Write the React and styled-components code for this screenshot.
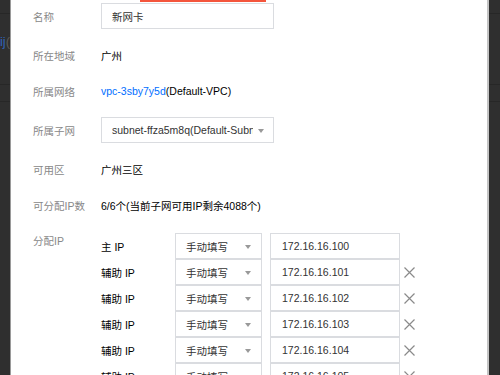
import React from 'react';
import styled, { createGlobalStyle } from 'styled-components';

const Global = createGlobalStyle`
  html, body { margin: 0; padding: 0; }
  body {
    font-family: "Liberation Sans", "Noto Sans CJK SC", sans-serif;
    font-size: 10.5px;
    color: #000;
    background: #2f2f2f;
  }
`;

const Screen = styled.div`
  display: flex;
  width: 500px;
  height: 375px;
  overflow: hidden;
`;

const Backdrop = styled.div`
  display: flex;
  flex-direction: column;
  width: ${(p) => p.w}px;
  flex-shrink: 0;
  background: #2f2f2f;
  overflow: hidden;
`;

const BackRow = styled.div`
  height: ${(p) => p.h}px;
  flex-shrink: 0;
  border-bottom: 1px solid #272727;
  display: flex;
  align-items: flex-start;
  justify-content: flex-end;
  padding-top: ${(p) => p.pt || 0}px;
  box-sizing: border-box;
  white-space: nowrap;
  overflow: hidden;
  font-size: 13px;
  color: #2f63b8;
`;

const Dim = styled.span`
  color: #5a5a5a;
`;

const Modal = styled.div`
  flex: 1;
  background: #fff;
  border-left: 1px solid #9a9a9a;
  border-right: 2px solid #c4c4c4;
  padding-left: 22px;
  overflow: hidden;
`;

const TopBar = styled.div`
  margin-left: 107px;
  width: 126px;
  height: 2px;
  background: #f4553c;
`;

const Form = styled.div`
  display: flex;
  flex-direction: column;
  gap: 16px;
  padding-top: 1px;
`;

const Item = styled.div`
  display: flex;
  align-items: ${(p) => (p.top ? 'flex-start' : 'center')};
  min-height: ${(p) => (p.text ? 20 : 26)}px;
  margin-top: ${(p) => p.mt || 0}px;
`;

const Label = styled.div`
  width: 68px;
  flex-shrink: 0;
  color: #888;
  line-height: ${(p) => (p.top ? '16px' : 'normal')};
`;

const Value = styled.div`
  color: #000;
  white-space: nowrap;
`;

const Link = styled.span`
  color: #006eff;
`;

const Input = styled.div`
  box-sizing: border-box;
  width: ${(p) => p.w}px;
  height: 26px;
  border: 1px solid #dadce0;
  padding-left: ${(p) => p.pl || 10}px;
  display: flex;
  align-items: center;
  color: #333;
  white-space: nowrap;
  overflow: hidden;
`;

const Select = styled(Input)`
  position: relative;
  padding-right: 20px;
  &::after {
    content: '';
    position: absolute;
    right: ${(p) => p.ar || 10}px;
    top: 11px;
    border-left: 3.5px solid transparent;
    border-right: 3.5px solid transparent;
    border-top: 4px solid #999;
  }
`;

const SelectText = styled.span`
  overflow: hidden;
`;

const IpList = styled.div`
  display: flex;
  flex-direction: column;
`;

const IpRow = styled.div`
  display: flex;
  align-items: center;
  height: 26px;
`;

const IpLabel = styled.div`
  width: 74px;
  flex-shrink: 0;
  color: #000;
`;

const Gap = styled.div`
  width: 8px;
  flex-shrink: 0;
`;

const Remove = styled.div`
  width: 14px;
  height: 14px;
  margin-left: 2px;
  display: flex;
  align-items: center;
  justify-content: center;
`;

const Close = () => (
  <svg width="11" height="11" viewBox="0 0 11 11">
    <path d="M0.5 0.5L10.5 10.5M10.5 0.5L0.5 10.5" stroke="#8a8a8a" strokeWidth="1.2" />
  </svg>
);

const ips = [
  { label: '主 IP', ip: '172.16.16.100', main: true },
  { label: '辅助 IP', ip: '172.16.16.101' },
  { label: '辅助 IP', ip: '172.16.16.102' },
  { label: '辅助 IP', ip: '172.16.16.103' },
  { label: '辅助 IP', ip: '172.16.16.104' },
  { label: '辅助 IP', ip: '172.16.16.105' },
];

export default function App() {
  return (
    <>
      <Global />
      <Screen>
        <Backdrop w={10}>
          <BackRow h={14} />
          <BackRow h={71} pt={20}>
            ij<Dim>(</Dim>
          </BackRow>
          <BackRow h={17} />
          <BackRow h={280} />
        </Backdrop>
        <Modal>
          <TopBar />
          <Form>
            <Item>
              <Label>名称</Label>
              <Input w={173}>新网卡</Input>
            </Item>
            <Item text>
              <Label>所在地域</Label>
              <Value>广州</Value>
            </Item>
            <Item text>
              <Label>所属网络</Label>
              <Value>
                <Link>vpc-3sby7y5d</Link>(Default-VPC)
              </Value>
            </Item>
            <Item>
              <Label>所属子网</Label>
              <Select w={173} ar={9}>
                <SelectText>subnet-ffza5m8q(Default-Subnet)</SelectText>
              </Select>
            </Item>
            <Item text>
              <Label>可用区</Label>
              <Value>广州三区</Value>
            </Item>
            <Item text>
              <Label>可分配IP数</Label>
              <Value>6/6个(当前子网可用IP剩余4088个)</Value>
            </Item>
            <Item top mt={2}>
              <Label top>分配IP</Label>
              <IpList>
                {ips.map((r, i) => (
                  <IpRow key={i}>
                    <IpLabel>{r.label}</IpLabel>
                    <Select w={87}>手动填写</Select>
                    <Gap />
                    <Input w={130} pl={11}>{r.ip}</Input>
                    {!r.main && (
                      <Remove>
                        <Close />
                      </Remove>
                    )}
                  </IpRow>
                ))}
              </IpList>
            </Item>
          </Form>
        </Modal>
        <Backdrop w={11}>
          <BackRow h={14} />
          <BackRow h={71} />
          <BackRow h={17} />
          <BackRow h={280} />
        </Backdrop>
      </Screen>
    </>
  );
}
